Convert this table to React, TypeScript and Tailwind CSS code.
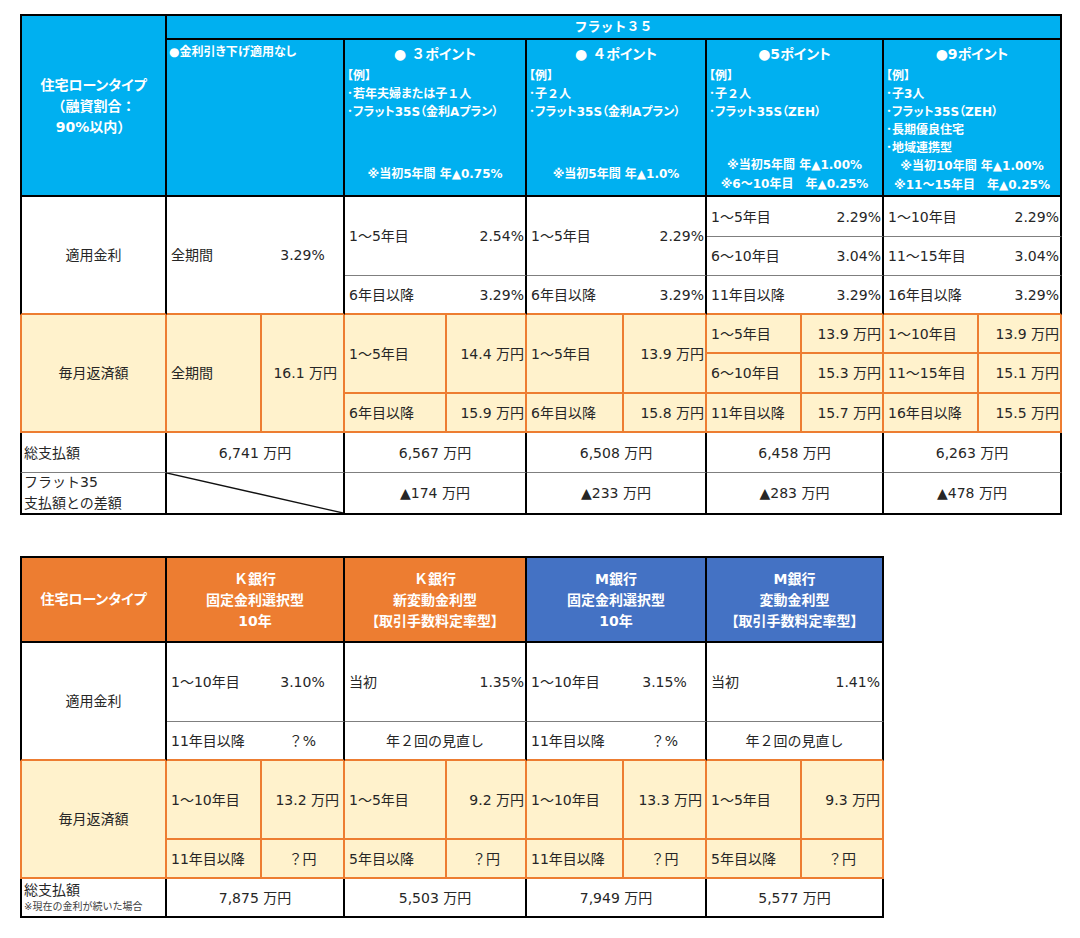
import React from 'react';

type CellProps = { className?: string; children?: React.ReactNode };

// plain grid cell, content vertically centred
const Cell: React.FC<CellProps> = ({ className = '', children }) => (
  <div className={`flex items-center text-[14px] leading-[18px] text-[#262626] ${className}`}>{children}</div>
);

// label left, value flush right
const Pair = ({ label, value, className = '', valueClass = 'pr-[1px]' }: { label: string; value: string; className?: string; valueClass?: string }) => (
  <Cell className={`justify-between pl-[4px] ${className}`}>
    <span>{label}</span>
    <span className={valueClass}>{value}</span>
  </Cell>
);

// keep full-width digits/letters full width inside 'palt' text
const Fw = ({ text }: { text: string }) => (
  <>
    {text.split(/([０-９Ｋ])/).map((s, i) =>
      /[０-９Ｋ]/.test(s) ? (
        <span key={i} className="[font-feature-settings:normal]">
          {s}
        </span>
      ) : (
        s
      ),
    )}
  </>
);

// white rows: gray rule below / orange rule below
const W_TOP = 'border-r-2 border-b border-r-black border-b-[#7f7f7f]';
const W_BOT = 'border-r-2 border-b-2 border-r-black border-b-[#ed7d31]';
const OR = 'border-r-2 border-b-2 border-[#ed7d31] bg-[#fff2cc]';
const TOTAL = 'border-r-2 border-b border-r-black border-b-[#7f7f7f] justify-center';
const DIFF = 'border-r-2 border-b-2 border-black justify-center';

const points = [
  {
    pos: 'col-start-4 col-span-2',
    title: '● ３ポイント',
    items: ['若年夫婦または子１人', 'フラット35S（金利Aプラン）'],
    notes: ['※当初5年間 年▲0.75%'],
    pb: 'pb-[11px]',
  },
  {
    pos: 'col-start-6 col-span-2',
    title: '● ４ポイント',
    items: ['子２人', 'フラット35S（金利Aプラン）'],
    notes: ['※当初5年間 年▲1.0%'],
    pb: 'pb-[11px]',
  },
  {
    pos: 'col-start-8 col-span-2',
    title: '●5ポイント',
    items: ['子２人', 'フラット35S（ZEH）'],
    notes: ['※当初5年間 年▲1.00%', '※6～10年目　年▲0.25%'],
    pb: 'pb-[1px]',
  },
  {
    pos: 'col-start-10 col-span-2',
    title: '●9ポイント',
    items: ['子3人', 'フラット35S（ZEH）', '長期優良住宅', '地域連携型'],
    notes: ['※当初10年間 年▲1.00%', '※11～15年目　年▲0.25%'],
    pb: 'pb-[1px]',
  },
];

const totals = [
  { pos: 'col-start-4 col-span-2', total: '6,567 万円', diff: '▲174 万円' },
  { pos: 'col-start-6 col-span-2', total: '6,508 万円', diff: '▲233 万円' },
  { pos: 'col-start-8 col-span-2', total: '6,458 万円', diff: '▲283 万円' },
  { pos: 'col-start-10 col-span-2', total: '6,263 万円', diff: '▲478 万円' },
];

const banks = [
  { pos: 'col-start-2 col-span-2 bg-[#ed7d31]', lines: ['Ｋ銀行', '固定金利選択型', '10年'] },
  { pos: 'col-start-4 col-span-2 bg-[#ed7d31]', lines: ['Ｋ銀行', '新変動金利型', '【取引手数料定率型】'] },
  { pos: 'col-start-6 col-span-2 bg-[#4472c4]', lines: ['M銀行', '固定金利選択型', '10年'] },
  { pos: 'col-start-8 col-span-2 bg-[#4472c4]', lines: ['M銀行', '変動金利型', '【取引手数料定率型】'] },
];

const FlatTable = () => (
  <div className="grid w-[1042px] grid-cols-[147px_95px_83px_102px_80px_97px_83px_95px_82px_95px_83px] grid-rows-[26px_157px_40px_39px_39px_39px_40px_39px_40px_42px]">
    {/* header */}
    <div className="col-start-1 row-start-1 row-span-2 flex flex-col items-center justify-center border-2 border-black bg-[#00b0f0] pt-[2px] text-center text-[14px] font-bold leading-[21px] text-white">
      <span className="[font-feature-settings:'palt']">住宅ローンタイプ</span>
      <span>（融資割合：</span>
      <span>90%以内）</span>
    </div>
    <div className="col-start-2 col-span-10 row-start-1 flex items-center justify-center border-t-2 border-r-2 border-b-2 border-black bg-[#00b0f0] text-[13px] font-bold text-white">
      フラット３５
    </div>
    <div className="col-start-2 col-span-2 row-start-2 border-r-2 border-b-2 border-black bg-[#00b0f0] pt-[3px] pl-[2px] text-[12px] font-bold leading-[18px] text-white [font-feature-settings:'palt']">
      ●金利引き下げ適用なし
    </div>
    {points.map((p) => (
      <div
        key={p.title}
        className={`${p.pos} row-start-2 flex flex-col border-r-2 border-b-2 border-black bg-[#00b0f0] pt-[4px] font-bold text-white [font-feature-settings:'palt'] ${p.pb}`}
      >
        <div className="text-center text-[14px] leading-[21px]">
          <Fw text={p.title} />
        </div>
        <div className="mt-[2px] pl-[2px] text-[12px] leading-[18px]">
          <div>【例】</div>
          {p.items.map((it) => (
            <div key={it}>
              ･<Fw text={it} />
            </div>
          ))}
        </div>
        <div className="mt-auto text-center text-[12px] leading-[19px]">
          {p.notes.map((n) => (
            <div key={n}>{n}</div>
          ))}
        </div>
      </div>
    ))}

    {/* 適用金利 */}
    <Cell className="col-start-1 row-start-3 row-span-3 justify-center border-l-2 border-r-2 border-b-2 border-l-black border-r-black border-b-[#ed7d31]">
      適用金利
    </Cell>
    <Cell className={`col-start-2 col-span-2 row-start-3 row-span-3 ${W_BOT}`}>
      <span className="w-[95px] pl-[4px]">全期間</span>
      <span className="flex-1 text-center">3.29%</span>
    </Cell>
    <Pair className={`col-start-4 col-span-2 row-start-3 row-span-2 ${W_TOP}`} label="1～5年目" value="2.54%" />
    <Pair className={`col-start-4 col-span-2 row-start-5 ${W_BOT}`} label="6年目以降" value="3.29%" />
    <Pair className={`col-start-6 col-span-2 row-start-3 row-span-2 ${W_TOP}`} label="1～5年目" value="2.29%" />
    <Pair className={`col-start-6 col-span-2 row-start-5 ${W_BOT}`} label="6年目以降" value="3.29%" />
    <Pair className={`col-start-8 col-span-2 row-start-3 ${W_TOP}`} label="1～5年目" value="2.29%" />
    <Pair className={`col-start-8 col-span-2 row-start-4 ${W_TOP}`} label="6～10年目" value="3.04%" />
    <Pair className={`col-start-8 col-span-2 row-start-5 ${W_BOT}`} label="11年目以降" value="3.29%" />
    <Pair className={`col-start-10 col-span-2 row-start-3 ${W_TOP}`} label="1～10年目" value="2.29%" />
    <Pair className={`col-start-10 col-span-2 row-start-4 ${W_TOP}`} label="11～15年目" value="3.04%" />
    <Pair className={`col-start-10 col-span-2 row-start-5 ${W_BOT}`} label="16年目以降" value="3.29%" />

    {/* 毎月返済額 */}
    <Cell className={`col-start-1 row-start-6 row-span-3 justify-center border-l-2 ${OR}`}>毎月返済額</Cell>
    <Cell className={`col-start-2 row-start-6 row-span-3 pl-[4px] ${OR}`}>全期間</Cell>
    <Cell className={`col-start-3 row-start-6 row-span-3 justify-end pr-[6px] ${OR}`}>16.1 万円</Cell>
    <Cell className={`col-start-4 row-start-6 row-span-2 pl-[4px] ${OR}`}>1～5年目</Cell>
    <Cell className={`col-start-5 row-start-6 row-span-2 justify-end pr-[1px] ${OR}`}>14.4 万円</Cell>
    <Cell className={`col-start-4 row-start-8 pl-[4px] ${OR}`}>6年目以降</Cell>
    <Cell className={`col-start-5 row-start-8 justify-end pr-[1px] ${OR}`}>15.9 万円</Cell>
    <Cell className={`col-start-6 row-start-6 row-span-2 pl-[4px] ${OR}`}>1～5年目</Cell>
    <Cell className={`col-start-7 row-start-6 row-span-2 justify-end pr-[1px] ${OR}`}>13.9 万円</Cell>
    <Cell className={`col-start-6 row-start-8 pl-[4px] ${OR}`}>6年目以降</Cell>
    <Cell className={`col-start-7 row-start-8 justify-end pr-[1px] ${OR}`}>15.8 万円</Cell>
    <Cell className={`col-start-8 row-start-6 pl-[4px] ${OR}`}>1～5年目</Cell>
    <Cell className={`col-start-9 row-start-6 justify-end pr-[1px] ${OR}`}>13.9 万円</Cell>
    <Cell className={`col-start-8 row-start-7 pl-[4px] ${OR}`}>6～10年目</Cell>
    <Cell className={`col-start-9 row-start-7 justify-end pr-[1px] ${OR}`}>15.3 万円</Cell>
    <Cell className={`col-start-8 row-start-8 pl-[4px] ${OR}`}>11年目以降</Cell>
    <Cell className={`col-start-9 row-start-8 justify-end pr-[1px] ${OR}`}>15.7 万円</Cell>
    <Cell className={`col-start-10 row-start-6 pl-[4px] ${OR}`}>1～10年目</Cell>
    <Cell className={`col-start-11 row-start-6 justify-end pr-[1px] ${OR}`}>13.9 万円</Cell>
    <Cell className={`col-start-10 row-start-7 pl-[4px] ${OR}`}>11～15年目</Cell>
    <Cell className={`col-start-11 row-start-7 justify-end pr-[1px] ${OR}`}>15.1 万円</Cell>
    <Cell className={`col-start-10 row-start-8 pl-[4px] ${OR}`}>16年目以降</Cell>
    <Cell className={`col-start-11 row-start-8 justify-end pr-[1px] ${OR}`}>15.5 万円</Cell>

    {/* 総支払額 / 差額 */}
    <Cell className="col-start-1 row-start-9 border-l-2 border-r-2 border-b border-l-black border-r-black border-b-[#7f7f7f] pl-[2px]">
      総支払額
    </Cell>
    <Cell className={`col-start-2 col-span-2 row-start-9 ${TOTAL}`}>6,741 万円</Cell>
    <div className="col-start-1 row-start-10 flex flex-col justify-center border-l-2 border-r-2 border-b-2 border-black pl-[2px] text-[14px] leading-[21px] text-[#262626]">
      <span>フラット35</span>
      <span>支払額との差額</span>
    </div>
    <div className="relative col-start-2 col-span-2 row-start-10 border-r-2 border-b-2 border-black">
      <svg className="absolute inset-0 h-full w-full" viewBox="0 0 100 100" preserveAspectRatio="none">
        <line x1="0" y1="0" x2="100" y2="100" stroke="#111" strokeWidth="1.3" vectorEffect="non-scaling-stroke" />
      </svg>
    </div>
    {totals.map((t) => (
      <React.Fragment key={t.total}>
        <Cell className={`${t.pos} row-start-9 ${TOTAL}`}>{t.total}</Cell>
        <Cell className={`${t.pos} row-start-10 ${DIFF}`}>{t.diff}</Cell>
      </React.Fragment>
    ))}
  </div>
);

const BankTable = () => (
  <div className="grid w-[864px] grid-cols-[147px_95px_83px_102px_80px_97px_83px_95px_82px] grid-rows-[87px_79px_39px_79px_39px_39px]">
    {/* header */}
    <div className="col-start-1 row-start-1 flex items-center justify-center border-2 border-black bg-[#ed7d31] text-[14px] font-bold text-white [font-feature-settings:'palt']">
      住宅ローンタイプ
    </div>
    {banks.map((b) => (
      <div
        key={b.lines.join()}
        className={`${b.pos} row-start-1 flex flex-col items-center justify-center border-t-2 border-r-2 border-b-2 border-black pt-[2px] text-center text-[14px] font-bold leading-[21px] text-white [font-feature-settings:'palt']`}
      >
        {b.lines.map((l) => (
          <span key={l}>
            <Fw text={l} />
          </span>
        ))}
      </div>
    ))}

    {/* 適用金利 */}
    <Cell className="col-start-1 row-start-2 row-span-2 justify-center border-l-2 border-r-2 border-b-2 border-l-black border-r-black border-b-[#ed7d31]">
      適用金利
    </Cell>
    <Cell className={`col-start-2 col-span-2 row-start-2 ${W_TOP}`}>
      <span className="w-[95px] pl-[4px]">1～10年目</span>
      <span className="flex-1 text-center">3.10%</span>
    </Cell>
    <Cell className={`col-start-2 col-span-2 row-start-3 ${W_BOT}`}>
      <span className="w-[95px] pl-[4px]">11年目以降</span>
      <span className="flex-1 text-center">？%</span>
    </Cell>
    <Pair className={`col-start-4 col-span-2 row-start-2 ${W_TOP}`} label="当初" value="1.35%" />
    <Cell className={`col-start-4 col-span-2 row-start-3 justify-center ${W_BOT}`}>年２回の見直し</Cell>
    <Cell className={`col-start-6 col-span-2 row-start-2 ${W_TOP}`}>
      <span className="w-[97px] pl-[4px]">1～10年目</span>
      <span className="flex-1 text-center">3.15%</span>
    </Cell>
    <Cell className={`col-start-6 col-span-2 row-start-3 ${W_BOT}`}>
      <span className="w-[97px] pl-[4px]">11年目以降</span>
      <span className="flex-1 text-center">？%</span>
    </Cell>
    <Pair className={`col-start-8 col-span-2 row-start-2 ${W_TOP}`} label="当初" value="1.41%" valueClass="pr-[2px]" />
    <Cell className={`col-start-8 col-span-2 row-start-3 justify-center ${W_BOT}`}>年２回の見直し</Cell>

    {/* 毎月返済額 */}
    <Cell className={`col-start-1 row-start-4 row-span-2 justify-center border-l-2 ${OR}`}>毎月返済額</Cell>
    <Cell className={`col-start-2 row-start-4 pl-[4px] ${OR}`}>1～10年目</Cell>
    <Cell className={`col-start-3 row-start-4 justify-end pr-[4px] ${OR}`}>13.2 万円</Cell>
    <Cell className={`col-start-2 row-start-5 pl-[4px] ${OR}`}>11年目以降</Cell>
    <Cell className={`col-start-3 row-start-5 justify-center ${OR}`}>？円</Cell>
    <Cell className={`col-start-4 row-start-4 pl-[4px] ${OR}`}>1～5年目</Cell>
    <Cell className={`col-start-5 row-start-4 justify-end pr-[1px] ${OR}`}>9.2 万円</Cell>
    <Cell className={`col-start-4 row-start-5 pl-[4px] ${OR}`}>5年目以降</Cell>
    <Cell className={`col-start-5 row-start-5 justify-center ${OR}`}>？円</Cell>
    <Cell className={`col-start-6 row-start-4 pl-[4px] ${OR}`}>1～10年目</Cell>
    <Cell className={`col-start-7 row-start-4 justify-end pr-[3px] ${OR}`}>13.3 万円</Cell>
    <Cell className={`col-start-6 row-start-5 pl-[4px] ${OR}`}>11年目以降</Cell>
    <Cell className={`col-start-7 row-start-5 justify-center ${OR}`}>？円</Cell>
    <Cell className={`col-start-8 row-start-4 pl-[4px] ${OR}`}>1～5年目</Cell>
    <Cell className={`col-start-9 row-start-4 justify-end pr-[2px] ${OR}`}>9.3 万円</Cell>
    <Cell className={`col-start-8 row-start-5 pl-[4px] ${OR}`}>5年目以降</Cell>
    <Cell className={`col-start-9 row-start-5 justify-center ${OR}`}>？円</Cell>

    {/* 総支払額 */}
    <div className="col-start-1 row-start-6 flex flex-col justify-center border-l-2 border-r-2 border-b-2 border-black pl-[2px] text-[#262626]">
      <span className="text-[14px] leading-[19px]">総支払額</span>
      <span className="text-[10px] leading-[14px] text-[#404040]">※現在の金利が続いた場合</span>
    </div>
    <Cell className={`col-start-2 col-span-2 row-start-6 ${DIFF}`}>7,875 万円</Cell>
    <Cell className={`col-start-4 col-span-2 row-start-6 ${DIFF}`}>5,503 万円</Cell>
    <Cell className={`col-start-6 col-span-2 row-start-6 ${DIFF}`}>7,949 万円</Cell>
    <Cell className={`col-start-8 col-span-2 row-start-6 ${DIFF}`}>5,577 万円</Cell>
  </div>
);

export default function App() {
  return (
    <div className="min-h-screen bg-white pt-[14px] pl-[20px] font-['DejaVu_Sans','Noto_Sans_CJK_JP',sans-serif]">
      <FlatTable />
      <div className="mt-[41px]">
        <BankTable />
      </div>
    </div>
  );
}
